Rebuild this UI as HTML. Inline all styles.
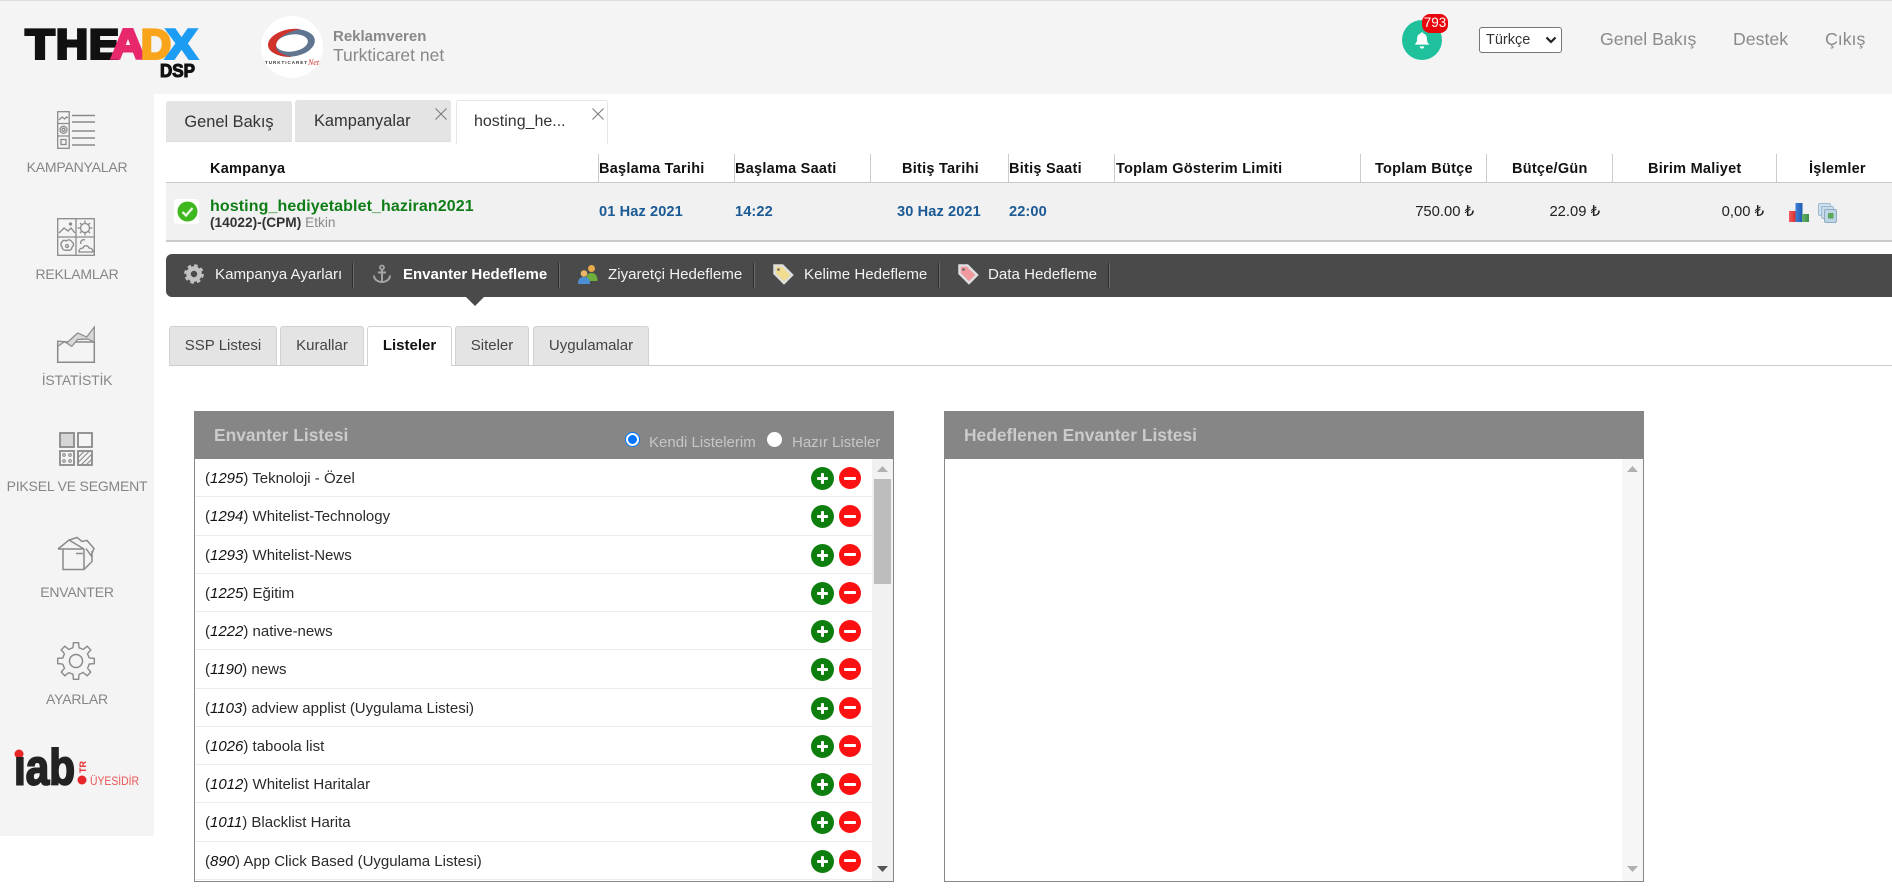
<!DOCTYPE html>
<html lang="tr"><head><meta charset="utf-8"><title>TheADX DSP</title>
<style>
*{box-sizing:border-box}
html,body{margin:0;padding:0;background:#fff}
body{position:relative;width:1892px;height:896px;overflow:hidden;font-family:"Liberation Sans",Arial,sans-serif;color:#222}
.a{position:absolute;white-space:nowrap}
svg{position:absolute;overflow:visible}
#top{left:0;top:0;width:1892px;height:94px;background:#f4f4f4;border-top:1px solid #ddd}
#side{left:0;top:94px;width:154px;height:742px;background:#f4f4f4}
.sl{left:0;width:154px;text-align:center;font-size:14px;line-height:16px;color:#868686;letter-spacing:-.2px}
.hl{top:27px;font-size:17.7px;line-height:24px;color:#8a8a8a}
.tab{top:101px;height:41px;background:#e4e4e4;border-radius:3px 3px 0 0;font-size:16.4px;line-height:42px;color:#333;text-align:center;border-bottom:1px solid #ddd}
.th{top:159px;font-size:14.5px;line-height:20px;font-weight:bold;color:#111;letter-spacing:.25px}
.sep{top:154px;width:1px;height:28px;background:#ccc}
.dt{top:202px;font-size:14.6px;line-height:20px;font-weight:bold;color:#1b5a94;letter-spacing:.1px}
.val{top:202px;font-size:14.8px;line-height:20px;color:#222;text-align:right}
.nt{top:265px;font-size:15.1px;line-height:20px;color:#f2f2f2}
.ns{top:263px;width:2px;height:25px;background:#2f2f2f;border-right:1px solid #6c6c6c}
.st{top:326px;height:39px;background:#e4e4e4;border:1px solid #d2d2d2;border-bottom:0;border-radius:3px 3px 0 0;font-size:15px;line-height:38px;color:#444;text-align:center}
.panel{top:411px;height:471px;border:1px solid #888;background:#fff}
.ph{position:absolute;left:-1px;right:-1px;top:-1px;height:48px;background:#868686}
.pt{position:absolute;left:20px;top:12px;font-size:17.4px;line-height:24px;font-weight:bold;color:#cbcbcb;white-space:nowrap}
.rl{top:433px;font-size:15px;line-height:20px;color:#c6c6c6}
.rad{position:absolute;margin:0;width:15px;height:15px;top:432px}
.track{position:absolute;top:47px;right:0;width:21px;bottom:0;background:#f1f1f1}
.rows{position:absolute;left:0;top:47px;width:677px}
.r{position:relative;height:38.25px;border-bottom:1px solid #ececec;font-size:15px;line-height:39px;padding-left:10px;color:#2a2a2a;white-space:nowrap}
.r i{color:#111}
.p,.m{position:absolute;top:8px;width:22px;height:22px;border-radius:50%}
.p{left:616px;width:23px;height:23px;background:#0e7f0e}
.m{left:644px;background:#fb1111}
.p:before,.m:before{content:"";position:absolute;left:6px;top:10px;width:11px;height:3px;background:#fff;border-radius:1px}
.m:before{left:5px;top:9.5px;width:12px}
.p:after{content:"";position:absolute;left:10px;top:6px;width:3px;height:11px;background:#fff;border-radius:1px}
</style></head><body>

<div class="a" id="top"></div>
<div class="a" id="side"></div>

<!-- logo -->
<svg style="left:0;top:0" width="220" height="90" font-family="Liberation Sans" font-weight="bold" font-size="42">
<g stroke-width="3">
<text x="25.500" y="58.500" fill="#111" stroke="#111" textLength="29" lengthAdjust="spacingAndGlyphs">T</text>
<text x="56" y="58.500" fill="#111" stroke="#111" textLength="32" lengthAdjust="spacingAndGlyphs">H</text>
<text x="89" y="58.500" fill="#111" stroke="#111" textLength="30" lengthAdjust="spacingAndGlyphs">E</text>
<text x="111" y="58.500" fill="#e8286c" stroke="#e8286c" textLength="34" lengthAdjust="spacingAndGlyphs">A</text>
<text x="141" y="58.500" fill="#f9a51c" stroke="#f9a51c" textLength="30" lengthAdjust="spacingAndGlyphs">D</text>
<text x="166" y="58.500" fill="#1c9cf2" stroke="#1c9cf2" textLength="31" lengthAdjust="spacingAndGlyphs">X</text>
</g>
<text x="160" y="77" font-size="18" fill="#111" stroke="#111" stroke-width="1.100" textLength="35" lengthAdjust="spacingAndGlyphs">DSP</text>
</svg>

<!-- advertiser -->
<svg style="left:261px;top:16px" width="62" height="62">
<circle cx="31" cy="31" r="31" fill="#fff"/>
<ellipse cx="31" cy="27" rx="23" ry="13.500" fill="#5f7590" transform="rotate(-8 31 27)"/>
<ellipse cx="31" cy="27" rx="16" ry="8.500" fill="#fff" transform="rotate(-8 31 27)"/>
<path d="M40 13C22 11 7 20 7 29c0 7 10 12 24 12-10-2-17-6-16-12C16 21 28 15 40 13z" fill="#d0322c"/>
<text x="4" y="48" font-family="Liberation Sans" font-size="4.500" font-weight="bold" fill="#333" textLength="42">TURKTICARET</text>
<text x="47" y="49" font-family="Liberation Serif" font-style="italic" font-size="8" fill="#d0322c">Net</text>
</svg>
<div class="a" style="left:333px;top:28px;font-size:15px;line-height:18px;font-weight:bold;color:#888">Reklamveren</div>
<div class="a" style="left:333px;top:44px;font-size:17.500px;line-height:22px;color:#888">Turkticaret net</div>

<!-- right header -->
<div class="a" style="left:1402px;top:20px;width:40px;height:40px;border-radius:50%;background:#1fc19c"></div>
<svg style="left:1413px;top:31px" width="18" height="19" viewBox="0 0 16 17"><path d="M8 1.200c.8 0 1.300.5 1.400 1.200 2.300.6 3 2.600 3 4.600 0 2.600.8 3.800 2.300 5.200H1.300C2.800 10.800 3.600 9.600 3.600 7c0-2 .7-4 3-4.600C6.700 1.700 7.200 1.200 8 1.200zM6 13.800h4a2 2 0 0 1-4 0z" fill="#fff"/></svg>
<div class="a" style="left:1422px;top:14px;width:26px;height:19px;border-radius:8px;background:#e8060c;color:#fff;font-size:13.500px;line-height:18px;text-align:center">793</div>
<select class="a" style="left:1479px;top:27px;width:83px;height:26px;font:14.500px 'Liberation Sans',Arial,sans-serif;color:#333;background:#fff;border:1px solid #767676;border-radius:3px;margin:0;padding-left:6px;appearance:none;-webkit-appearance:none"><option>Türkçe</option></select>
<svg style="left:1545px;top:36px" width="12" height="8"><path d="M1.500 1.500L6 6l4.500-4.500" fill="none" stroke="#222" stroke-width="2.200"/></svg>
<div class="a hl" style="left:1600px">Genel Bakış</div>
<div class="a hl" style="left:1733px">Destek</div>
<div class="a hl" style="left:1825px">Çıkış</div>

<!-- sidebar -->
<svg style="left:57px;top:111px" width="38" height="38" fill="none" stroke="#8a8a8a" stroke-width="1.300">
<rect x=".7" y=".7" width="11.500" height="36.600"/><path d="M.7 12.500H12.200M.7 25H12.200"/>
<path d="M2 9l3-3 2.500 2 2-2 1.500 1M2.500 4h.1"/><circle cx="6.500" cy="18.800" r="3.500"/><circle cx="6.500" cy="18.800" r="1.500"/><rect x="4" y="28.500" width="5" height="5"/>
<path d="M15 4.500H38M15 11H38M15 20H38M15 27H38M15 34H38" stroke-width="1.500"/>
</svg>
<div class="a sl" style="top:159px">KAMPANYALAR</div>

<svg style="left:57px;top:218px" width="38" height="38" fill="none" stroke="#8a8a8a" stroke-width="1.300">
<rect x=".7" y=".7" width="36.600" height="36.600"/><path d="M19 1V37M1 19H37"/>
<path d="M2 15l5-5 4 3 3-3 4 5"/><circle cx="13.500" cy="6" r="1" fill="#8a8a8a"/>
<circle cx="28" cy="10" r="4.500"/><path d="M28 2.500v2.500M28 15v2.500M20.500 10h2.500M33 10h2.500M23 5l1.500 1.500M31.500 13.500L33 15M23 15l1.500-1.500M31.500 6.500L33 5"/>
<path d="M9 23c3-2 5-1 6 1 2 1 2 4 0 5 0 3-3 4-5 3-3 1-5-1-5-3-2-2-1-5 1-6 0-1 2-1 3 0z"/><circle cx="10" cy="28" r="1.500"/>
<path d="M22 34c0-3 2-4 4-4 1-3 5-3 6 0 2 0 4 1 4 4zM24 26a3 3 0 0 1 4-4"/>
</svg>
<div class="a sl" style="top:266px">REKLAMLAR</div>

<svg style="left:57px;top:326px" width="38" height="37" fill="none" stroke="#8a8a8a" stroke-width="1.500">
<path d="M.7 16H37.300V36.300H.7z"/>
<path d="M.7 16V15l10 1 10-9 9 4 7.600-10V16l-6.600-3-10 .5-6 7-7-5-7 5z" fill="#d8d8d8" stroke-width="1.200"/>
<path d="M5 18h.1M10 20h.1M8 17h.1M16 12h.1M20 14h.1M24 11h.1M28 14h.1M32 9h.1M34 12h.1" stroke="#666" stroke-width="1.500"/>
</svg>
<div class="a sl" style="top:372px">İSTATİSTİK</div>

<svg style="left:59px;top:432px" width="34" height="34" fill="none" stroke="#8a8a8a" stroke-width="1.800">
<rect x="1" y="1" width="14" height="14" fill="#d6d6d6"/><rect x="19" y="1" width="14" height="14"/>
<rect x="1" y="19" width="14" height="14"/><rect x="19" y="19" width="14" height="14"/>
<g stroke-width="1.100"><circle cx="5" cy="23" r="1.300"/><circle cx="11" cy="23" r="1.300"/><circle cx="5" cy="29" r="1.300"/><circle cx="11" cy="29" r="1.300"/>
<path d="M19.500 25l6-6M19.500 30l11-11M22 33l11-11M27 33l6-6"/></g>
</svg>
<div class="a sl" style="top:478px">PIKSEL VE SEGMENT</div>

<svg style="left:57px;top:537px" width="38" height="34" fill="none" stroke="#8a8a8a" stroke-width="1.500">
<path d="M6 12V32.500H27V12M27 12H6M27 32.500l8-8V14M1 12L12 3l8-2.500 5 4 5-1 7 8-3 7-5-7M6 12H1M12 3l15 9M19 16.500h7"/>
</svg>
<div class="a sl" style="top:584px">ENVANTER</div>

<svg style="left:57px;top:642px" width="38" height="38" viewBox="-19 -19 38 38" fill="none" stroke="#8a8a8a" stroke-width="1.400">
<defs><path id="tooth" d="M-3.040-13.150L-2.570-18.320H2.570L3.040-13.150A13.500 13.500 0 0 1 7.150-11.450"/></defs>
<use href="#tooth"/><use href="#tooth" transform="rotate(45)"/><use href="#tooth" transform="rotate(90)"/><use href="#tooth" transform="rotate(135)"/><use href="#tooth" transform="rotate(180)"/><use href="#tooth" transform="rotate(225)"/><use href="#tooth" transform="rotate(270)"/><use href="#tooth" transform="rotate(315)"/>
<circle r="6.500" stroke-width="1.500"/>
</svg>
<div class="a sl" style="top:691px">AYARLAR</div>

<svg style="left:0;top:740px" width="154" height="54" font-family="Liberation Sans">
<circle cx="19" cy="14" r="4.500" fill="#e8262a"/>
<text x="14" y="44.500" font-size="50" font-weight="bold" fill="#222" stroke="#222" stroke-width="2" textLength="61" lengthAdjust="spacingAndGlyphs">ıab</text>
<circle cx="82" cy="40" r="4.500" fill="#e8262a"/>
<text transform="translate(86 33) rotate(-90)" font-size="9" font-weight="bold" fill="#e8262a">TR</text>
<text x="90" y="45" font-size="12" fill="#e85555" textLength="49" lengthAdjust="spacingAndGlyphs">ÜYESİDİR</text>
</svg>

<!-- top tabs -->
<div class="a tab" style="left:166px;width:126px">Genel Bakış</div>
<div class="a tab" style="left:295px;top:100px;height:42px;width:156px;text-align:left;padding-left:19px">Kampanyalar</div>
<svg style="left:435px;top:108px" width="12" height="12" stroke="#777" stroke-width="1"><path d="M.5.5L11.500 11.500M11.500.5L.5 11.500"/></svg>
<div class="a" style="left:456px;top:100px;width:152px;height:44px;background:#fff;border:1px solid #e6e6e6;border-bottom:0;border-radius:3px 3px 0 0;font-size:16px;line-height:42px;padding-left:17px;color:#333">hosting_he...</div>
<svg style="left:592px;top:108px" width="12" height="12" stroke="#777" stroke-width="1"><path d="M.5.5L11.500 11.500M11.500.5L.5 11.500"/></svg>

<!-- campaign table -->
<div class="a th" style="left:210px">Kampanya</div>
<div class="a sep" style="left:598px"></div><div class="a th" style="left:599px">Başlama Tarihi</div>
<div class="a sep" style="left:734px"></div><div class="a th" style="left:735px">Başlama Saati</div>
<div class="a sep" style="left:870px"></div><div class="a th" style="left:902px">Bitiş Tarihi</div>
<div class="a sep" style="left:1008px"></div><div class="a th" style="left:1009px">Bitiş Saati</div>
<div class="a sep" style="left:1114px"></div><div class="a th" style="left:1116px">Toplam Gösterim Limiti</div>
<div class="a sep" style="left:1360px"></div><div class="a th" style="left:1375px">Toplam Bütçe</div>
<div class="a sep" style="left:1486px"></div><div class="a th" style="left:1512px">Bütçe/Gün</div>
<div class="a sep" style="left:1612px"></div><div class="a th" style="left:1648px">Birim Maliyet</div>
<div class="a sep" style="left:1776px"></div><div class="a th" style="left:1809px">İşlemler</div>

<div class="a" style="left:166px;top:182px;width:1726px;height:60px;background:#f1f1f1;border-top:1px solid #c8c8c8;border-bottom:2px solid #cacaca"></div>
<div class="a" style="left:174px;top:199px;width:25px;height:25px;background:#fff;border-radius:3px"></div>
<svg style="left:177px;top:201px" width="21" height="21"><circle cx="10.500" cy="10.500" r="10" fill="#3fb81f"/><path d="M5.500 11l3.500 3.500 6.500-7.500" fill="none" stroke="#e8f5e0" stroke-width="2.400"/></svg>
<div class="a" style="left:210px;top:197px;font-size:16px;line-height:20px;font-weight:bold;color:#0f7d16;letter-spacing:.1px">hosting_hediyetablet_haziran2021</div>
<div class="a" style="left:210px;top:214px;font-size:13.700px;line-height:18px;color:#8a8a8a"><b style="color:#333">(14022)-(CPM)</b> Etkin</div>
<div class="a dt" style="left:599px">01 Haz 2021</div>
<div class="a dt" style="left:735px">14:22</div>
<div class="a dt" style="left:897px">30 Haz 2021</div>
<div class="a dt" style="left:1009px">22:00</div>
<div class="a val" style="left:1374px;width:100px">750.00 ₺</div>
<div class="a val" style="left:1500px;width:100px">22.09 ₺</div>
<div class="a val" style="left:1664px;width:100px">0,00 ₺</div>
<svg style="left:1789px;top:203px" width="20" height="19">
<defs><linearGradient id="gr" x1="0" y1="0" x2="1" y2="0"><stop offset="0" stop-color="#f25a5a"/><stop offset="1" stop-color="#d03030"/></linearGradient>
<linearGradient id="gb" x1="0" y1="0" x2="1" y2="0"><stop offset="0" stop-color="#3f80d8"/><stop offset="1" stop-color="#1d5cb0"/></linearGradient>
<linearGradient id="gg" x1="0" y1="0" x2="1" y2="0"><stop offset="0" stop-color="#64b064"/><stop offset="1" stop-color="#3c8f4e"/></linearGradient></defs>
<rect x="0" y="8" width="7" height="11" fill="url(#gr)"/><rect x="6.500" y="0" width="7" height="19" fill="url(#gb)"/><rect x="13" y="11" width="7" height="8" fill="url(#gg)"/></svg>
<svg style="left:1818px;top:203px" width="19" height="20">
<rect x=".5" y=".5" width="12" height="12" rx="1.500" fill="#cfe0ee" stroke="#9db8cc"/><rect x="3.500" y="3.500" width="12" height="12" rx="1.500" fill="#c8dbea" stroke="#9db8cc"/><rect x="6.500" y="6.500" width="12" height="13" rx="1.500" fill="#bcd4e4" stroke="#8eacc2"/><rect x="10" y="10" width="5.500" height="5.500" fill="#5aa858"/></svg>

<!-- dark nav -->
<div class="a" style="left:166px;top:254px;width:1726px;height:43px;background:#4a4a4a;border-radius:6px 0 0 6px"></div>
<div class="a" style="left:466px;top:297px;width:0;height:0;border-left:9px solid transparent;border-right:9px solid transparent;border-top:9px solid #4a4a4a"></div>
<svg style="left:184px;top:264px" width="20" height="20" viewBox="-10 -10 20 20"><circle r="5.500" fill="none" stroke="#c2c2c2" stroke-width="4.500"/><circle r="8.300" fill="none" stroke="#c2c2c2" stroke-width="3" stroke-dasharray="3.500 3"/></svg>
<div class="a nt" style="left:215px">Kampanya Ayarları</div><div class="a ns" style="left:352px"></div>
<svg style="left:372px;top:264px" width="20" height="20" fill="none" stroke="#a5a5a5" stroke-width="1.800"><circle cx="10" cy="3.500" r="2"/><path d="M10 5.500V18M6 8.500h8M2 11.500c0 4 4 6.500 8 6.500s8-2.500 8-6.500" stroke-width="2"/></svg>
<div class="a nt" style="left:403px;font-size:15px;font-weight:bold;color:#fff">Envanter Hedefleme</div><div class="a ns" style="left:558px"></div>
<svg style="left:578px;top:264px" width="20" height="20"><circle cx="13.500" cy="4.500" r="3.500" fill="#e8a94a"/><path d="M8 17c0-6 2-8 5.500-8s6 2 6 8z" fill="#6fae3d"/><circle cx="6" cy="9.500" r="3.300" fill="#e8b56a"/><path d="M0 20c0-5 2-7 6-7s6 2 6 7z" fill="#4d8fd6"/></svg>
<div class="a nt" style="left:608px">Ziyaretçi Hedefleme</div><div class="a ns" style="left:753px"></div>
<svg style="left:773px;top:264px" width="20" height="20"><path d="M1.500 1.500h8L19 11l-8 8-9.500-9.500z" fill="#f2dc8f" stroke="#dedede" stroke-width="2.500"/><circle cx="5.500" cy="5.500" r="1.300" fill="#666"/></svg>
<div class="a nt" style="left:804px">Kelime Hedefleme</div><div class="a ns" style="left:938px"></div>
<svg style="left:958px;top:264px" width="20" height="20"><path d="M1.500 1.500h8L19 11l-8 8-9.500-9.500z" fill="#f09aa0" stroke="#dedede" stroke-width="2.500"/><circle cx="5.500" cy="5.500" r="1.300" fill="#666"/></svg>
<div class="a nt" style="left:988px">Data Hedefleme</div><div class="a ns" style="left:1108px"></div>

<!-- sub tabs -->
<div class="a" style="left:169px;top:365px;width:1723px;height:1px;background:#ccc"></div>
<div class="a st" style="left:169px;width:108px">SSP Listesi</div>
<div class="a st" style="left:280px;width:84px">Kurallar</div>
<div class="a st" style="left:367px;width:85px;height:40px;background:#fff;font-weight:bold;color:#111">Listeler</div>
<div class="a st" style="left:455px;width:74px">Siteler</div>
<div class="a st" style="left:533px;width:116px">Uygulamalar</div>

<!-- left panel -->
<div class="a panel" style="left:194px;width:700px">
 <div class="ph"><div class="pt">Envanter Listesi</div></div>
 <div class="track">
  <svg style="left:4px;top:6px" width="13" height="8"><path d="M6.500 1L12 7H1z" fill="#b0b0b0"/></svg>
  <div style="position:absolute;left:2px;top:20px;width:17px;height:105px;background:#bdbdbd"></div>
  <svg style="left:4px;top:406px" width="13" height="8"><path d="M1 1h11L6.500 7z" fill="#555"/></svg>
 </div>
 <div class="rows">
  <div class="r">(<i>1295</i>) Teknoloji - Özel<span class="p"></span><span class="m"></span></div>
  <div class="r">(<i>1294</i>) Whitelist-Technology<span class="p"></span><span class="m"></span></div>
  <div class="r">(<i>1293</i>) Whitelist-News<span class="p"></span><span class="m"></span></div>
  <div class="r">(<i>1225</i>) Eğitim<span class="p"></span><span class="m"></span></div>
  <div class="r">(<i>1222</i>) native-news<span class="p"></span><span class="m"></span></div>
  <div class="r">(<i>1190</i>) news<span class="p"></span><span class="m"></span></div>
  <div class="r">(<i>1103</i>) adview applist (Uygulama Listesi)<span class="p"></span><span class="m"></span></div>
  <div class="r">(<i>1026</i>) taboola list<span class="p"></span><span class="m"></span></div>
  <div class="r">(<i>1012</i>) Whitelist Haritalar<span class="p"></span><span class="m"></span></div>
  <div class="r">(<i>1011</i>) Blacklist Harita<span class="p"></span><span class="m"></span></div>
  <div class="r">(<i>890</i>) App Click Based (Uygulama Listesi)<span class="p"></span><span class="m"></span></div>
 </div>
</div>
<input class="rad" type="radio" name="lt" checked style="left:625px">
<div class="a rl" style="left:649px">Kendi Listelerim</div>
<input class="rad" type="radio" name="lt" style="left:767px;appearance:none;-webkit-appearance:none;background:#fff;border-radius:50%;border:0">
<div class="a rl" style="left:792px">Hazır Listeler</div>

<!-- right panel -->
<div class="a panel" style="left:944px;width:700px">
 <div class="ph"><div class="pt">Hedeflenen Envanter Listesi</div></div>
 <div class="track" style="background:#f6f6f6">
  <svg style="left:4px;top:6px" width="13" height="8"><path d="M6.500 1L12 7H1z" fill="#b0b0b0"/></svg>
  <svg style="left:4px;top:406px" width="13" height="8"><path d="M1 1h11L6.500 7z" fill="#b0b0b0"/></svg>
 </div>
</div>

</body></html>
